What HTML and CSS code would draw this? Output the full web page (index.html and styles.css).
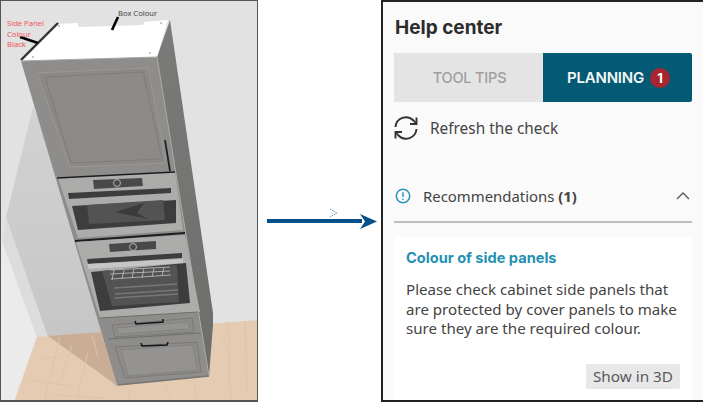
FILE: index.html
```html
<!DOCTYPE html>
<html lang="en">
<head>
<meta charset="utf-8">
<title>Help center</title>
<link rel="stylesheet" href="styles.css">
</head>
<body>
<main class="page">
  <figure class="scene">
    <svg class="scene-svg" viewBox="0 0 258 402" width="258" height="402" aria-label="Tall cabinet with two ovens">
      <defs>
        <filter id="soft"><feGaussianBlur stdDeviation="0.4"/></filter>
        <linearGradient id="shadowFill" x1="0" y1="0" x2="0" y2="1">
          <stop offset="0" stop-color="#d2d2d2"/>
          <stop offset="1" stop-color="#c6c6c6"/>
        </linearGradient>
        <linearGradient id="sideFill" x1="0" y1="0" x2="0" y2="1">
          <stop offset="0" stop-color="#7c7b79"/>
          <stop offset="1" stop-color="#6c6c6a"/>
        </linearGradient>
      </defs>
      <g filter="url(#soft)">
        <rect class="wall" width="258" height="402"/>
        <polygon class="wall-left-pale" points="0,236 37,337 14,402 0,402"/>
        <polygon class="wall-band" points="6,217 48,337 37,337 3,243"/>
        <polygon class="wall-shadow" points="33,107 6,217 48,337 102,333 60,160"/>
        <polygon class="floor" points="37,337 258,320 258,402 14,402"/>
        <polygon class="floor-shadow" points="48,336 101,332 118,388 112,382"/>
        <g class="grain">
          <path d="M60 337 L44 402M88 352 L76 402M42 360 L62 354M28 380 L72 386M52 395 L104 398M228 322 L231 402M245 321 L247 390M130 388 L128 402M165 386 L170 402M194 384 L198 402M222 335 C230 350 232 375 226 392M72 345 L60 385M92 335 L98 358"/>
        </g>

        <polygon class="side" points="157,57 170,20 213,313 213,325 209,376"/>
        <polygon class="top" points="22,61 58,24 78,23 78,27 143,25 144,22 168,20 157,57"/>
        <path class="edge" d="M21 60 L58 23"/>
        <circle class="screw" cx="33" cy="57" r="1"/>
        <circle class="screw" cx="150" cy="53" r="1"/>
        <circle class="screw" cx="161" cy="23" r="1"/>
        <circle class="screw" cx="59" cy="26" r="1"/>
        <polygon class="front" points="21,61 157,57 209,376 117,385"/>
        <path class="corner" d="M157 57 L209 376"/>
        <path class="corner" d="M21 61 L157 57"/>

        <polygon class="door-edge" points="37,73 148,68 166,163 70,167"/>
        <polygon class="door" points="45,77 143,72 162,159 71,163"/>
        <path class="handle" d="M165 140 L170 171"/>

        <polygon class="steel" points="58,178 175,172 183,230 78,238"/>
        <path class="gap" d="M57 178 L175 172"/>
        <polygon class="panel" points="93,180 142,178 143,186 94,189"/>
        <circle class="dial" cx="117" cy="183" r="3.500"/>
        <polygon class="dark" points="68,193 171,188 171,193 69,199"/>
        <polygon class="dark" points="72,206 176,200 176,223 78,230"/>
        <polygon class="glass" points="87,205 163,200 165,220 89,224"/>
        <polygon class="glass-mark" points="115,212 144,203 137,213 148,219"/>

        <path class="gap-thick" d="M75 241 L185 233"/>
        <polygon class="steel" points="76,242 185,235 200,312 100,318"/>
        <polygon class="panel" points="109,244 156,241 156,249 110,252"/>
        <circle class="dial" cx="133" cy="247" r="3.500"/>
        <polygon class="dark" points="87,259 182,253 182,258 88,264"/>
        <polygon class="steel-light" points="87,264 183,259 183,263 89,269"/>
        <polygon class="dark" points="91,272 186,263 190,303 100,311"/>
        <polygon class="glass" points="102,271 177,265 179,302 112,306"/>
        <path class="rack" d="M110 270 L170 267M110 274 L170 271M111 279 L171 275M114 270 L112 280M124 270 L122 279M134 269 L132 278M144 268 L142 278M154 268 L152 277M164 267 L162 276"/>
        <path class="shelf" d="M114 288 L177 284M115 294 L178 290M114 298 L178 294"/>

        <path class="line" d="M100 318 L198 312"/>
        <polygon class="drawer-edge" points="112,325 192,318 194,332 115,337"/>
        <polygon class="drawer" points="116,328 188,322 190,329 118,334"/>
        <path class="pull" d="M135 321 L136 324 L163 322 L163 319"/>
        <path class="line" d="M108 339 L201 333"/>
        <polygon class="drawer-edge" points="115,347 197,342 201,372 125,378"/>
        <polygon class="drawer" points="121,350 193,345 197,370 128,376"/>
        <path class="pull" d="M141 343 L142 346 L167 345 L168 342"/>
        <path class="base" d="M118 385 L209 376"/>

        <path class="pointer" d="M112 30 L118 17"/>
        <path class="pointer" d="M20 37 L38 43"/>
      </g>
      <text class="note note-dark" x="118" y="16">Box Colour</text>
      <text class="note note-red" x="7" y="26">Side Panel</text>
      <text class="note note-red" x="7" y="36.500">Colour</text>
      <text class="note note-red" x="7" y="47">Black</text>
    </svg>
  </figure>

  <div class="gutter">
    <svg class="arrow" viewBox="-2 0 123 40" width="123" height="40" aria-hidden="true">
      <path class="cursor" d="M70 7 L77 11 L70 15"/>
      <path class="shaft" d="M7 19 H102"/>
      <polygon class="head" points="100,12 117,19.500 100,27 105,19.500"/>
    </svg>
  </div>

  <section class="help">
    <h1 class="help-title">Help center</h1>
    <div class="tabs">
      <div class="tab">TOOL TIPS</div>
      <div class="tab tab-active">PLANNING <span class="badge">1</span></div>
    </div>
    <div class="refresh">
      <svg class="refresh-icon" viewBox="0 0 26 26" width="26" height="26" aria-hidden="true">
        <path d="M2.500 12 A10.500 10.500 0 0 1 20.500 5.500 L23 8.500"/>
        <path d="M23.500 2.500 V9 H17"/>
        <path d="M23.500 14 A10.500 10.500 0 0 1 5.500 20.500 L3 17.500"/>
        <path d="M2.500 23.500 V17 H9"/>
      </svg>
      <span>Refresh the check</span>
    </div>
    <div class="rec-head">
      <svg class="info-icon" viewBox="0 0 16 16" width="16" height="16" aria-hidden="true">
        <circle cx="8" cy="8" r="6.700"/>
        <path d="M8 4.200 V9"/>
        <path d="M8 10.800 V12"/>
      </svg>
      <span class="rec-label">Recommendations <b>(1)</b></span>
      <svg class="chevron" viewBox="0 0 14 8" width="14" height="8" aria-hidden="true">
        <path d="M1 7 L7 1 L13 7"/>
      </svg>
    </div>
    <article class="card">
      <h2 class="card-title">Colour of side panels</h2>
      <p class="card-text">Please check cabinet side panels that are protected by cover panels to make sure they are the required colour.</p>
      <div class="card-actions"><button class="show-btn" type="button">Show in 3D</button></div>
    </article>
  </section>
</main>
</body>
</html>
```

FILE: styles.css
```css
* { box-sizing: border-box; }
html, body { margin: 0; padding: 0; background: #fff; }
body { width: 703px; height: 402px; overflow: hidden; font-family: "Noto Sans", "Open Sans", sans-serif; }
.page { display: flex; width: 703px; height: 402px; }

.scene { margin: 0; width: 258px; height: 402px; flex: none; border: 1px solid #555; border-bottom-width: 2px; overflow: hidden; }
.scene-svg { display: block; margin: -1px; }
.wall { fill: #e2e2e2; }
.wall-left-pale { fill: #ebebeb; }
.wall-band { fill: #dcdcdc; }
.wall-shadow { fill: url(#shadowFill); }
.floor { fill: #e6cbb3; }
.floor-shadow { fill: #c9ad96; }
.grain path { fill: none; stroke: #dfc3aa; stroke-width: 1; }
.side { fill: url(#sideFill); }
.top { fill: #fff; }
.edge { fill: none; stroke: #333; stroke-width: 2.400; }
.screw { fill: #b5b5b5; }
.front { fill: #8e8d8b; }
.corner { fill: none; stroke: #a8a8a6; stroke-width: 1; }
.door-edge { fill: #8a8987; stroke: #999896; stroke-width: 1; }
.door { fill: #8b8a88; stroke: #7b7a78; stroke-width: 0.800; }
.handle { fill: none; stroke: #222; stroke-width: 1.800; }
.steel { fill: #acacab; }
.steel-light { fill: #c6c6c5; }
.gap { fill: none; stroke: #1d1d1d; stroke-width: 1.500; }
.gap-thick { fill: none; stroke: #1d1d1d; stroke-width: 2; }
.panel { fill: #4a4a4a; }
.dial { fill: none; stroke: #c8c8c8; stroke-width: 0.800; }
.dark { fill: #3e3e3e; }
.glass { fill: #525252; }
.glass-mark { fill: #3b3b3b; }
.rack { fill: none; stroke: #c2c2c2; stroke-width: 0.800; }
.shelf { fill: none; stroke: #777; stroke-width: 1.400; }
.line { fill: none; stroke: #6d6d6b; stroke-width: 1.200; }
.base { fill: none; stroke: #757472; stroke-width: 1.600; }
.drawer-edge { fill: #8d8c8a; stroke: #757472; stroke-width: 0.800; }
.drawer { fill: #949391; stroke: #7b7a78; stroke-width: 0.600; }
.pull { fill: none; stroke: #141414; stroke-width: 1.500; }
.pointer { fill: none; stroke: #000; stroke-width: 2.600; }
.note { font-family: "Noto Sans", sans-serif; font-size: 7.600px; }
.note-dark { fill: #444; }
.note-red { fill: #f2545b; }

.gutter { width: 123px; flex: none; display: flex; align-items: center; padding-top: 41px; background: #fff; }
.arrow { display: block; }
.shaft { fill: none; stroke: #03508a; stroke-width: 4; }
.head { fill: #03508a; }
.cursor { fill: none; stroke: #6d8fb0; stroke-width: 1; stroke-dasharray: 1.500 1; }

.help { flex: 1; min-width: 0; height: 402px; display: flex; flex-direction: column; overflow: hidden; background: #fafafa; border: 2px solid #222; border-right: 0; padding: 14px 11px 0 11px; color: #444; }
.help-title { margin: 0 0 0 1px; font-family: "Inter", sans-serif; font-size: 19px; line-height: 23px; font-weight: 700; color: #2c2c2c; }
.tabs { display: flex; flex: none; height: 49px; margin-top: 14px; }
.tab { flex: 1; display: flex; align-items: center; justify-content: center; gap: 6px; padding-left: 2px; background: #e4e4e4; color: #9f9f9f; font-family: "Inter", sans-serif; font-size: 14.500px; font-weight: 500; letter-spacing: -0.200px; }
.tab-active { background: #045a74; color: #f2f6f7; font-size: 15px; font-weight: 600; border-radius: 0 2px 2px 0; }
.badge { width: 20px; height: 20px; border-radius: 50%; background: #a9252f; color: #fff; font-size: 13px; font-weight: 700; display: flex; align-items: center; justify-content: center; }
.refresh { display: flex; flex: none; align-items: center; gap: 11px; margin-top: 13px; height: 26px; font-size: 15.400px; color: #444; margin-left: -1px; }
.refresh-icon path { fill: none; stroke: #333; stroke-width: 1.900; }
.rec-head { position: relative; display: flex; flex: none; align-items: center; height: 26px; margin-top: 42px; font-size: 14.900px; color: #444; }
.rec-head::after { content: ""; position: absolute; left: 0; right: 0; bottom: -14px; height: 2px; background: #bdbdbd; }
.info-icon { flex: none; margin-left: 1px; margin-right: 12px; }
.info-icon circle, .info-icon path { fill: none; stroke: #2b93b8; stroke-width: 1.500; }
.rec-label { flex: 1; }
.rec-label b { font-weight: 700; }
.chevron { margin-right: 2px; }
.chevron path { fill: none; stroke: #555; stroke-width: 1.300; }
.card { flex: 1; margin-top: 28px; background: #fff; padding: 12px 12px 0; }
.card-title { margin: 0; font-family: "Inter", sans-serif; font-size: 14.600px; line-height: 18px; font-weight: 700; color: #2390b2; }
.card-text { margin: 13px 0 0; font-size: 15.100px; line-height: 19.500px; color: #444; }
.card-actions { display: flex; justify-content: flex-end; margin-top: 25px; }
.show-btn { width: 94px; height: 25px; padding: 0; border: 0; border-radius: 2px; background: #e8e8e8; color: #5a5a5a; font: inherit; font-size: 15.300px; }
```
